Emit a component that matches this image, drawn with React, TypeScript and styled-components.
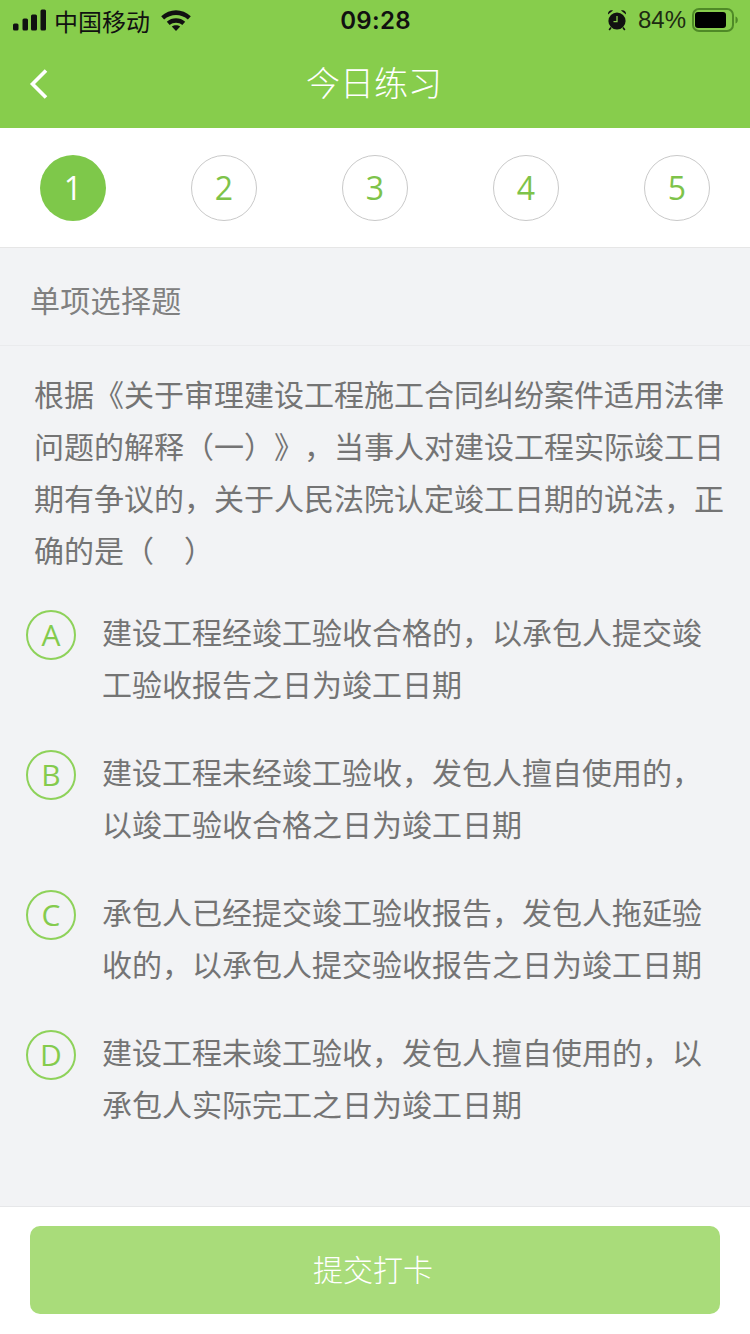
import { FC } from "react";
import styled, { createGlobalStyle } from "styled-components";

const GlobalStyle = createGlobalStyle`
  html, body {
    margin: 0;
    padding: 0;
    background: #f2f3f5;
  }
  * {
    box-sizing: border-box;
  }
`;

const Page = styled.div`
  width: 750px;
  height: 1334px;
  display: flex;
  flex-direction: column;
  overflow: hidden;
  background: #f2f3f5;
  font-family: "Noto Sans CJK SC", "Liberation Sans", sans-serif;
  text-spacing-trim: space-all;
`;

const Header = styled.header`
  background: #87cd4c;
  flex-shrink: 0;
`;

const StatusBar = styled.div`
  height: 40px;
  padding: 0 12px 0 13px;
  display: grid;
  grid-template-columns: 1fr auto 1fr;
  align-items: center;
  color: #111;
  font-size: 24px;
`;

const StatusLeft = styled.div`
  display: flex;
  align-items: center;
  gap: 7px;
`;

const StatusRight = styled.div`
  display: flex;
  align-items: center;
  justify-content: flex-end;
  gap: 6px;
`;

const Clock = styled.div`
  font-family: Inter, "Liberation Sans", sans-serif;
  font-size: 24px;
  font-weight: 600;
  letter-spacing: 0.3px;
`;

const Percent = styled.span`
  margin-left: 5px;
  font-family: "Liberation Sans", sans-serif;
  font-size: 24px;
  color: #1d2a12;
`;

const NavBar = styled.div`
  height: 88px;
  padding: 0 29px;
  display: grid;
  grid-template-columns: 60px 1fr 60px;
  align-items: center;
  color: #fff;
`;

const NavTitle = styled.h1`
  margin: 0;
  padding: 0 2px 4px 0;
  text-align: center;
  font-size: 34px;
  font-weight: 300;
  line-height: 84px;
`;

const Steps = styled.nav`
  height: 120px;
  flex-shrink: 0;
  padding: 27px 40px 0;
  display: flex;
  justify-content: space-between;
  align-items: flex-start;
  background: #fff;
  border-bottom: 1px solid #e6e6e6;
`;

const Step = styled.div<{ $active?: boolean }>`
  width: 66px;
  height: 66px;
  padding-bottom: 2px;
  border-radius: 50%;
  display: flex;
  align-items: center;
  justify-content: center;
  font-family: "Open Sans", "Liberation Sans", sans-serif;
  font-size: 32px;
  color: ${(props) => (props.$active ? "#fff" : "#7ec34a")};
  background: ${(props) => (props.$active ? "#7ec84a" : "#fff")};
  border: ${(props) => (props.$active ? "none" : "1px solid #c9c9c9")};
`;

const SectionTitle = styled.div`
  height: 98px;
  flex-shrink: 0;
  padding: 4px 30px 0;
  display: flex;
  align-items: center;
  font-size: 30px;
  letter-spacing: 0.3px;
  color: #808080;
  border-bottom: 1px solid #eaebed;
`;

const Body = styled.main`
  flex: 1;
  padding: 21px 26px 0 34px;
`;

const Question = styled.p`
  margin: 0 0 30px;
  font-size: 30px;
  line-height: 52px;
  color: #747474;
`;

const OptionList = styled.div`
  margin-left: -8px;
  display: flex;
  flex-direction: column;
  gap: 36px;
`;

const OptionRow = styled.div`
  display: flex;
  align-items: flex-start;
  gap: 26px;
`;

const OptionMark = styled.div`
  width: 50px;
  height: 50px;
  margin-top: 5px;
  padding-bottom: 1px;
  flex-shrink: 0;
  border-radius: 50%;
  border: 2px solid #8ed25a;
  display: flex;
  align-items: center;
  justify-content: center;
  font-family: "Open Sans", "Liberation Sans", sans-serif;
  font-size: 30px;
  color: #84cb4d;
`;

const OptionText = styled.div`
  width: 600px;
  font-size: 30px;
  line-height: 52px;
  color: #747474;
`;

const Footer = styled.footer`
  height: 128px;
  flex-shrink: 0;
  padding: 19px 31px 0 30px;
  background: #fff;
  border-top: 1px solid #e6e7e9;
`;

const SubmitButton = styled.button`
  width: 690px;
  height: 88px;
  padding: 0 4px 4px 0;
  border: none;
  border-radius: 10px;
  background: #a9dc7a;
  color: #fff;
  font-family: inherit;
  font-size: 30px;
  font-weight: 300;
`;

const SignalIcon: FC = () => (
  <svg width="34" height="22" viewBox="0 0 34 22">
    <rect x="0" y="14.5" width="5.5" height="7" rx="1.5" fill="#111" />
    <rect x="9.5" y="9.5" width="5.5" height="12" rx="1.5" fill="#111" />
    <rect x="18" y="5.5" width="6" height="16" rx="1.5" fill="#111" />
    <rect x="27.5" y="0.5" width="5.5" height="21" rx="1.5" fill="#111" />
  </svg>
);

const WifiIcon: FC = () => (
  <svg width="30" height="22" viewBox="0 0 30 22" style={{ marginLeft: 4 }}>
    <path d="M0.2 7.2C8.5 -0.8 21.5 -0.8 29.8 7.2L26.9 10.4C20.3 4.4 9.7 4.4 3.1 10.4Z" fill="#111" />
    <path d="M5.8 12.8C11 8.2 19 8.2 24.2 12.8L21.3 16C17.8 13 12.2 13 8.7 16Z" fill="#111" />
    <path d="M10.8 17.6C13.2 15.7 16.8 15.7 19.2 17.6L15 22Z" fill="#111" />
  </svg>
);

const AlarmIcon: FC = () => (
  <svg width="20" height="22" viewBox="0 0 20 22">
    <circle cx="10" cy="12" r="8.6" fill="#111" />
    <path d="M1 5.5C0.6 2.6 3 0.6 6 1.4Z" fill="#111" />
    <path d="M19 5.5C19.4 2.6 17 0.6 14 1.4Z" fill="#111" />
    <path d="M10 7V12.6H6.5" stroke="#87cd4c" strokeWidth="1.3" fill="none" />
    <path d="M4 18.5L2.2 21M16 18.5L17.8 21" stroke="#111" strokeWidth="1.6" />
  </svg>
);

const BatteryIcon: FC = () => (
  <svg width="46" height="24" viewBox="0 0 46 24">
    <rect x="1" y="1" width="40" height="22" rx="6" fill="none" stroke="#4f8a27" strokeWidth="2" />
    <rect x="3" y="4" width="31" height="16" rx="3" fill="#000" />
    <path d="M43.5 8.5C45 9 45.8 10.3 45.8 12C45.8 13.7 45 15 43.5 15.5Z" fill="#4f8a27" />
  </svg>
);

const BackIcon: FC = () => (
  <svg width="20" height="32" viewBox="0 0 20 32">
    <path d="M17 2.5L3.5 16L17 29.5" stroke="#fff" strokeWidth="3.6" fill="none" />
  </svg>
);

const steps = [1, 2, 3, 4, 5];

const options = [
  { key: "A", text: "建设工程经竣工验收合格的，以承包人提交竣工验收报告之日为竣工日期" },
  { key: "B", text: "建设工程未经竣工验收，发包人擅自使用的，以竣工验收合格之日为竣工日期" },
  { key: "C", text: "承包人已经提交竣工验收报告，发包人拖延验收的，以承包人提交验收报告之日为竣工日期" },
  { key: "D", text: "建设工程未竣工验收，发包人擅自使用的，以承包人实际完工之日为竣工日期" },
];

const App: FC = () => {
  return (
    <Page>
      <GlobalStyle />
      <Header>
        <StatusBar>
          <StatusLeft>
            <SignalIcon />
            <span>中国移动</span>
            <WifiIcon />
          </StatusLeft>
          <Clock>09:28</Clock>
          <StatusRight>
            <AlarmIcon />
            <Percent>84%</Percent>
            <BatteryIcon />
          </StatusRight>
        </StatusBar>
        <NavBar>
          <BackIcon />
          <NavTitle>今日练习</NavTitle>
        </NavBar>
      </Header>
      <Steps>
        {steps.map((n) => (
          <Step key={n} $active={n === 1}>
            {n}
          </Step>
        ))}
      </Steps>
      <SectionTitle>单项选择题</SectionTitle>
      <Body>
        <Question>
          根据《关于审理建设工程施工合同纠纷案件适用法律问题的解释（一）》，当事人对建设工程实际竣工日期有争议的，关于人民法院认定竣工日期的说法，正确的是（&emsp;）
        </Question>
        <OptionList>
          {options.map((item) => (
            <OptionRow key={item.key}>
              <OptionMark>{item.key}</OptionMark>
              <OptionText>{item.text}</OptionText>
            </OptionRow>
          ))}
        </OptionList>
      </Body>
      <Footer>
        <SubmitButton>提交打卡</SubmitButton>
      </Footer>
    </Page>
  );
};

export default App;
